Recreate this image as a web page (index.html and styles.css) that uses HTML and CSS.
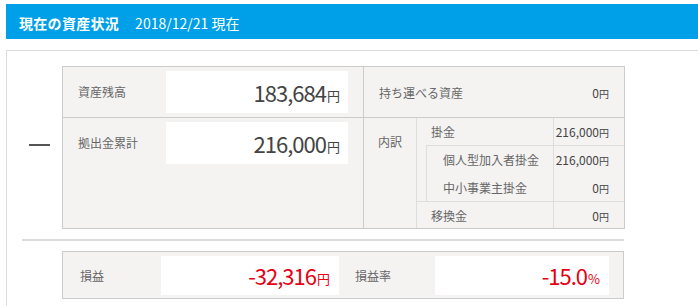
FILE: index.html
```html
<!DOCTYPE html>
<html lang="ja">
<head>
  <meta charset="UTF-8">
  <title>現在の資産状況</title>
  <link rel="stylesheet" href="styles.css">
</head>
<body>
  <h2 class="status-bar">
    <span class="status-title">現在の資産状況</span>
    <span class="status-date">2018/12/21 現在</span>
  </h2>

  <div class="panel">
    <div class="summary">
      <div class="dash"><span></span></div>

      <div class="assets">
        <div class="assets-main">
          <div class="main-row">
            <div class="label">資産残高</div>
            <div class="amount-box"><span class="num">183,684</span><span class="unit">円</span></div>
          </div>
          <div class="main-row tall">
            <div class="label">拠出金累計</div>
            <div class="amount-box"><span class="num">216,000</span><span class="unit">円</span></div>
          </div>
        </div>

        <div class="assets-side">
          <div class="side-row">
            <div class="label">持ち運べる資産</div>
            <div class="small-value">0<span class="unit">円</span></div>
          </div>
          <div class="breakdown-row">
            <div class="breakdown-title">内訳</div>
            <div class="breakdown">
              <div class="b-row">
                <div class="b-label">掛金</div>
                <div class="small-value">216,000<span class="unit">円</span></div>
              </div>
              <div class="b-group">
                <div class="b-row">
                  <div class="b-label">個人型加入者掛金</div>
                  <div class="small-value">216,000<span class="unit">円</span></div>
                </div>
                <div class="b-row tall">
                  <div class="b-label">中小事業主掛金</div>
                  <div class="small-value">0<span class="unit">円</span></div>
                </div>
              </div>
              <div class="b-row b-last">
                <div class="b-label">移換金</div>
                <div class="small-value">0<span class="unit">円</span></div>
              </div>
            </div>
          </div>
        </div>
      </div>
    </div>

    <div class="divider"></div>

    <div class="profit">
      <div class="p-label">損益</div>
      <div class="amount-box minus wide"><span class="num">-32,316</span><span class="unit">円</span></div>
      <div class="p-label">損益率</div>
      <div class="amount-box minus"><span class="num">-15.0</span><span class="unit">%</span></div>
    </div>
  </div>
</body>
</html>
```

FILE: styles.css
```css
* {
  box-sizing: border-box;
}

body {
  margin: 0;
  padding: 4px 0 0 6px;
  overflow: hidden;
  background: #fff;
  color: #444;
  font-family: "Noto Sans CJK JP", sans-serif;
}

.status-bar {
  margin: 0;
  height: 35px;
  display: flex;
  align-items: center;
  padding: 2px 0 0 13px;
  background: #00a0e9;
  color: #fff;
  font-size: 14px;
  font-weight: normal;
}

.status-title {
  font-weight: bold;
  margin-right: 16px;
  letter-spacing: 0.3px;
}

.panel {
  margin-top: 11px;
  border: 1px solid #ddd;
  border-right: none;
  padding: 15px 0 20px 15px;
}

.summary {
  display: flex;
}

.dash {
  width: 40px;
  padding: 78px 0 0 7px;
}

.dash span {
  display: block;
  width: 21px;
  height: 2px;
  background: #555;
}

.assets {
  width: 563px;
  display: flex;
  border: 1px solid #ccc;
  background: #f4f3f2;
}

.label {
  font-size: 12px;
  color: #666;
}

.assets-main {
  width: 300px;
}

.main-row {
  display: flex;
  height: 51px;
  padding-top: 4px;
  border-bottom: 1px solid #ccc;
}

.main-row.tall {
  height: 110px;
  border-bottom: none;
}

.main-row .label {
  width: 103px;
  padding-left: 15px;
  line-height: 42px;
}

.amount-box {
  width: 182px;
  height: 42px;
  display: flex;
  align-items: center;
  justify-content: flex-end;
  padding-right: 8px;
  background: #fff;
  color: #444;
}

.amount-box .num {
  font-size: 22px;
  letter-spacing: -1px;
}

.amount-box .unit {
  font-size: 13px;
  margin-top: 6px;
  margin-left: 1px;
}

.assets-side {
  flex: 1;
  border-left: 1px solid #ccc;
}

.side-row {
  height: 51px;
  display: flex;
  align-items: center;
  justify-content: space-between;
  padding: 0 15px;
  border-bottom: 1px solid #ccc;
}

.small-value {
  font-size: 12px;
  color: #444;
  white-space: nowrap;
}

.small-value .unit {
  font-size: 10px;
}

.breakdown-row {
  display: flex;
  height: 110px;
}

.breakdown-title {
  width: 53px;
  padding-top: 15px;
  border-right: 1px solid #ddd;
  text-align: center;
  font-size: 12px;
  color: #666;
}

.breakdown {
  flex: 1;
}

.b-row {
  display: flex;
  align-items: center;
  height: 27px;
}

.b-row.tall {
  height: 28px;
}

.b-label {
  width: 137px;
  height: 100%;
  display: flex;
  align-items: center;
  padding-left: 14px;
  border-right: 1px solid #ddd;
  font-size: 12px;
  color: #666;
}

.b-row .small-value {
  flex: 1;
  text-align: right;
  padding-right: 15px;
}

.b-group {
  margin-left: 9px;
  border-left: 1px solid #ddd;
  border-top: 1px solid #ddd;
}

.b-group .b-label {
  width: 127px;
  padding-left: 16px;
}

.b-last {
  border-top: 1px solid #ddd;
}

.divider {
  width: 602px;
  height: 2px;
  margin: 10px 0;
  background: #ddd;
}

.profit {
  margin-left: 40px;
  width: 562px;
  height: 48px;
  display: flex;
  align-items: center;
  padding-right: 14px;
  border: 1px solid #ccc;
  background: #f4f3f2;
}

.p-label {
  width: 96px;
  padding-left: 16px;
  font-size: 12px;
  color: #666;
}

.profit .p-label:first-child {
  width: 98px;
  padding-left: 17px;
}

.profit .amount-box {
  width: 174px;
  height: 39px;
  padding-right: 9px;
}

.profit .amount-box.wide {
  width: 178px;
}

.amount-box.minus {
  color: #e60012;
}
```
